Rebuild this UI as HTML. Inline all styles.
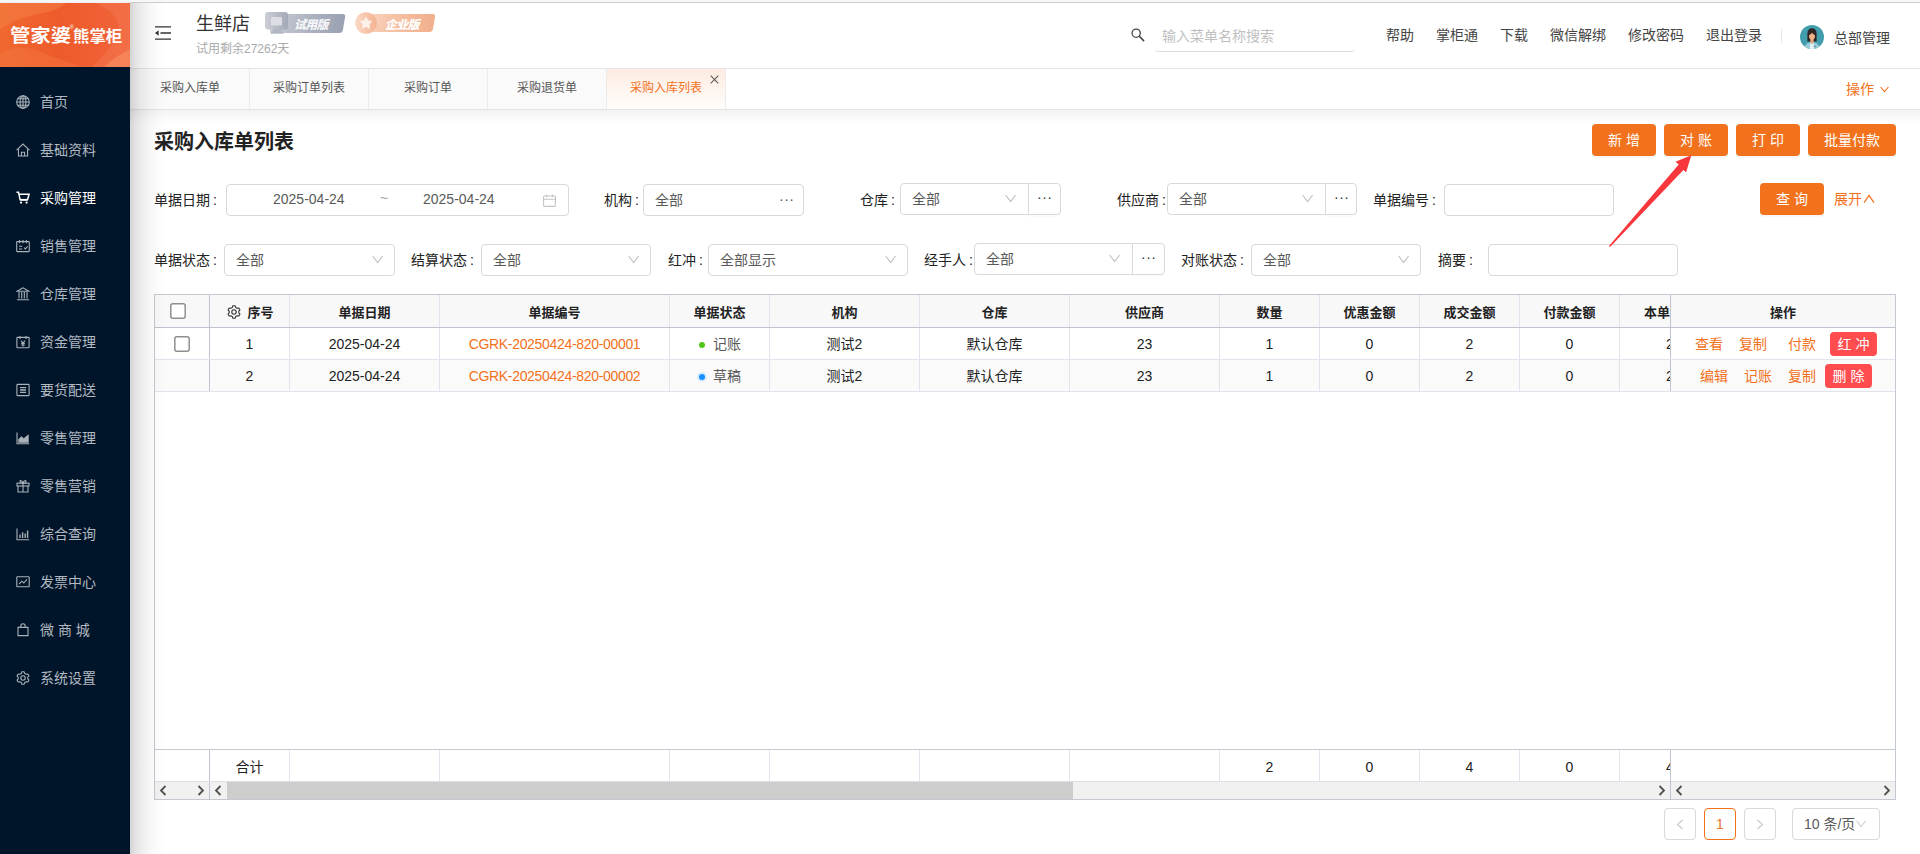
<!DOCTYPE html>
<html lang="zh-CN">
<head>
<meta charset="utf-8">
<title>采购入库单列表</title>
<style>
*{box-sizing:border-box;margin:0;padding:0}
html,body{width:1920px;height:854px;overflow:hidden;background:#fff}
body{font-family:"Liberation Sans","Noto Sans CJK SC",sans-serif;font-size:14px;color:#333;position:relative}
.abs{position:absolute}
.t{position:absolute;white-space:nowrap;line-height:1}
/* top strip */
#topline{left:0;top:0;width:1920px;height:3px;background:linear-gradient(90deg,#eef1f4 0,#eef1f4 130px,#cdcdcd 130px) 0 2px/100% 1px no-repeat,#f7f7f9}
/* sidebar */
#side{left:0;top:3px;width:130px;height:851px;background:#001529}
#logo{left:0;top:0;width:130px;height:64px;overflow:hidden;background:linear-gradient(90deg,#f0682f 0%,#ee5b2b 45%,#f0633a 100%)}
.mi{position:absolute;left:0;width:130px;height:40px;color:#b2b9c1;font-size:14px}
.mi svg{position:absolute;left:16px;top:13px;width:14px;height:14px;fill:none;stroke:#a9b1b9;stroke-width:1.1}
.mi span{position:absolute;left:40px;top:0;line-height:40px;white-space:nowrap}
.mi.on{color:#fff}
.mi.on svg{stroke:#fff}
/* header */
#hdr{left:130px;top:3px;width:1790px;height:66px;background:#fff;border-bottom:1px solid #e6e6e6}
#tabs{left:130px;top:69px;width:1790px;height:41px;background:#fff;border-bottom:1px solid #e4e4e4}
.tab{position:absolute;top:0;height:40px;width:119px;background:#fafafa;border-right:1px solid #ebebeb;font-size:12px;color:#555;text-align:center;line-height:38px}
.tab.on{color:#f2711c;background:linear-gradient(180deg,#fdebe0 0%,#fef5ee 50%,#fffdfb 100%)}
#shadowL{left:130px;top:3px;width:36px;height:851px;background:linear-gradient(90deg,rgba(0,0,0,.17) 0,rgba(0,0,0,.115) 5px,rgba(0,0,0,.08) 10px,rgba(0,0,0,.05) 16px,rgba(0,0,0,.028) 22px,rgba(0,0,0,.01) 28px,rgba(0,0,0,0) 36px);pointer-events:none}
#shadowT{left:130px;top:110px;width:1790px;height:16px;background:linear-gradient(180deg,rgba(0,0,0,.05) 0,rgba(0,0,0,.02) 50%,rgba(0,0,0,0) 100%)}
.nav{top:25px;font-size:14px;color:#444}
/* form */
.lbl{position:absolute;font-size:14px;color:#222;white-space:nowrap;line-height:32px;height:32px}
.box{position:absolute;height:32px;border:1px solid #d9d9d9;border-radius:4px;background:#fff;font-size:14px;color:#595959;line-height:30px;white-space:nowrap}
.box .v{position:absolute;left:11px;top:0}
.btn{position:absolute;height:32px;border-radius:4px;background:#f2711c;color:#fff;font-size:14px;text-align:center;line-height:32px;white-space:nowrap;box-shadow:0 2px 0 rgba(0,0,0,.03)}
.chev{position:absolute;width:12px;height:9px;fill:none;stroke:#bfbfbf;stroke-width:1.1}
.dots{position:absolute;font-size:14px;color:#555;letter-spacing:.5px;line-height:1}
.lbl i{font-style:normal;margin-left:3px}
/* table */
#tbl{left:154px;top:294px;width:1742px;height:506px;border:1px solid #c3c8d1;background:#fff;overflow:hidden}
.vl{position:absolute;width:1px;background:#e1e4ec}
.hl{position:absolute;height:1px;background:#e1e4ec}
.th{position:absolute;top:0;height:32px;line-height:35px;font-size:13px;font-weight:bold;color:#222;text-align:center;white-space:nowrap}
.td{position:absolute;height:31px;line-height:33px;font-size:14px;color:#222;text-align:center;white-space:nowrap}
.lk{color:#f2711c}
.code{letter-spacing:-.32px}
.cb{position:absolute;width:16px;height:16px;border:2px solid #9a9a9a;border-radius:2px;background:#fff}
</style>
</head>
<body>
<div class="abs" id="topline"></div>

<!-- SIDEBAR -->
<div class="abs" id="side">
  <div class="abs" id="logo">
    <svg class="abs" style="left:0;top:0" width="130" height="64" viewBox="0 0 130 64">
      <path d="M0 0H66C58 8 46 9 34 12 20 15 8 20 0 27Z" fill="#f6854a" opacity=".45"/>
      <path d="M0 50C14 42 30 44 44 50 58 56 70 60 84 64H0Z" fill="#f47a44" opacity=".4"/>
      <path d="M96 0H130V64H92C104 52 112 44 118 30 122 18 112 8 96 0Z" fill="#f57c55" opacity=".42"/>
      <path d="M104 64C112 56 122 50 130 46V64Z" fill="#f9986a" opacity=".5"/>
    </svg>
    <span class="t" style="left:10px;top:24px;font-size:18px;font-weight:700;color:#fff;transform:scaleX(1.13);transform-origin:0 0">管家婆</span>
    <span class="t" style="left:70px;top:22px;font-size:5px;color:#fff">®</span>
    <span class="t" style="left:72.5px;top:26px;font-size:15.5px;font-weight:700;color:#fff;transform:scaleX(1.06);transform-origin:0 0">熊掌柜</span>
  </div>
  <div class="mi" style="top:79px"><svg viewBox="0 0 14 14"><circle cx="7" cy="7" r="6.3"/><ellipse cx="7" cy="7" rx="2.9" ry="6.3"/><path d="M7 .7v12.6M.7 7h12.6M1.6 3.8h10.8M1.6 10.2h10.8"/></svg><span>首页</span></div>
  <div class="mi" style="top:127px"><svg viewBox="0 0 14 14"><path d="M.6 7.2 7 1l6.4 6.2"/><path d="M2.4 5.8V13h9.2V5.8"/><path d="M5.4 13V9.2h3.2V13"/></svg><span>基础资料</span></div>
  <div class="mi on" style="top:175px"><svg viewBox="0 0 14 14"><path d="M.5 1.2h2l1.6 7.6h7.4l1.6-5.6H3.2" stroke-width="1.5"/><circle cx="5" cy="11.6" r="1.1" fill="#fff" stroke="none"/><circle cx="10.6" cy="11.6" r="1.1" fill="#fff" stroke="none"/><path d="M4.2 8.8h7.2" stroke-width="1.8"/></svg><span>采购管理</span></div>
  <div class="mi" style="top:223px"><svg viewBox="0 0 14 14"><rect x=".7" y="2.6" width="12.6" height="10" rx=".6"/><path d="M3.6 1v3.2M7 1v3.2M10.4 1v3.2M3 7.2h3.2M3 10h3.2M8 8.6l1.4 1.4 2.2-2.6"/></svg><span>销售管理</span></div>
  <div class="mi" style="top:271px"><svg viewBox="0 0 14 14"><path d="M7 .8 1 4.2h12Z"/><path d="M1 12.8h12M3 5v6.6M5.7 5v6.6M8.3 5v6.6M11 5v6.6"/></svg><span>仓库管理</span></div>
  <div class="mi" style="top:319px"><svg viewBox="0 0 14 14"><rect x=".9" y="2.4" width="12.2" height="10.4" rx=".6"/><path d="M4 1v3M10 1v3M5 5.6 7 8l2-2.4M7 8v3.4M5.2 8.4h3.6M5.2 10h3.6"/></svg><span>资金管理</span></div>
  <div class="mi" style="top:367px"><svg viewBox="0 0 14 14"><rect x=".9" y="1.4" width="12.2" height="11.2" rx=".6"/><path d="M4 4.6h6M4 7h6M4 9.4h6" stroke-width="1.3"/></svg><span>要货配送</span></div>
  <div class="mi" style="top:415px"><svg viewBox="0 0 14 14"><path d="M1 1.5v11.3h12.2"/><path d="M2.6 11.4V8.2l2.8-2.6 2.4 2 4.6-3.8v7.6Z" fill="#a9b1b9" stroke-width=".6"/></svg><span>零售管理</span></div>
  <div class="mi" style="top:463px"><svg viewBox="0 0 14 14"><rect x="1" y="4.2" width="12" height="2.8"/><path d="M2 7v6h10V7M7 4.2V13M7 4.2C5 4.2 3.6 3.4 4 2.2 4.6.8 6.6 2 7 4.2ZM7 4.2C9 4.2 10.4 3.4 10 2.2 9.4.8 7.4 2 7 4.2Z"/></svg><span>零售营销</span></div>
  <div class="mi" style="top:511px"><svg viewBox="0 0 14 14"><path d="M1 1.5v11.3h12.2"/><path d="M4 11V7.6M6.6 11V5.2M9.2 11V6.6M11.6 11V3.4" stroke-width="1.4"/></svg><span>综合查询</span></div>
  <div class="mi" style="top:559px"><svg viewBox="0 0 14 14"><rect x=".8" y="1.8" width="12.4" height="10" rx=".6"/><path d="M3 9.2l2.8-3 2 1.8 3.2-3.6"/></svg><span>发票中心</span></div>
  <div class="mi" style="top:607px"><svg viewBox="0 0 14 14"><path d="M2 4.4h10v8.2H2Z"/><path d="M4.8 4.4V3a2.2 2.2 0 0 1 4.4 0v1.4"/></svg><span>微 商 城</span></div>
  <div class="mi" style="top:655px"><svg viewBox="0 0 14 14"><path d="M8.68 2.40 8.09 0.80 5.91 0.80 5.32 2.40 3.85 3.25 2.17 2.95 1.08 4.85 2.17 6.15 2.17 7.85 1.08 9.15 2.17 11.05 3.85 10.75 5.32 11.60 5.91 13.20 8.09 13.20 8.68 11.60 10.15 10.75 11.83 11.05 12.92 9.15 11.83 7.85 11.83 6.15 12.92 4.85 11.83 2.95 10.15 3.25Z" stroke-linejoin="round"/><circle cx="7" cy="7" r="2.2"/></svg><span>系统设置</span></div>
</div>

<!-- HEADER -->
<div class="abs" id="hdr">
  <svg class="abs" style="left:25px;top:23px" width="16" height="14" viewBox="0 0 16 14"><path d="M0 .8h16M5.5 7h10.5M0 13.2h16" stroke="#333" stroke-width="1.3" fill="none"/><path d="M0 7 3.6 4.2v5.6Z" fill="#333"/></svg>
  <span class="t" style="left:66px;top:12px;font-size:18px;color:#333">生鲜店</span>
  <span class="t" style="left:66px;top:40px;font-size:12px;color:#aaa">试用剩余27262天</span>
  <!-- trial badge -->
  <div class="abs" style="left:141px;top:11px;width:73px;height:19px;border-radius:3px;background:linear-gradient(90deg,#c9ccd4 0%,#a9afbd 60%,#9aa1b2 100%);transform:skewX(-10deg)"></div>
  <svg class="abs" style="left:135px;top:9px" width="24" height="22" viewBox="0 0 24 22"><defs><linearGradient id="gm" x1="0" x2="1"><stop offset="0" stop-color="#ccced6"/><stop offset="1" stop-color="#a3a9b8"/></linearGradient></defs><rect x="0" y="0" width="23" height="17.5" rx="3" fill="url(#gm)"/><rect x="6" y="5" width="11" height="8.5" rx="1" fill="#dcdee3"/><path d="M8 17h8l1 4H7Z" fill="#b3b8c4"/><rect x="5.5" y="20" width="13" height="1.8" rx=".9" fill="#b3b8c4"/></svg>
  <span class="t" style="left:164px;top:16px;font-size:12px;font-weight:900;font-style:italic;color:#f4f5f8;letter-spacing:-.8px">试用版</span>
  <!-- enterprise badge -->
  <div class="abs" style="left:232px;top:11px;width:72px;height:18px;border-radius:3px;background:linear-gradient(90deg,#f9d6c2 0%,#f4bb9c 60%,#f2b08c 100%);transform:skewX(-10deg)"></div>
  <svg class="abs" style="left:225px;top:9px" width="22" height="22" viewBox="0 0 22 22"><defs><linearGradient id="go" x1="0" x2="1"><stop offset="0" stop-color="#fad9c6"/><stop offset="1" stop-color="#f3b291"/></linearGradient></defs><circle cx="11" cy="11" r="10.8" fill="url(#go)"/><path d="M11 5.2l1.8 3.7 4 .6-2.9 2.8.7 4-3.6-1.9-3.6 1.9.7-4L5.2 9.5l4-.6Z" fill="#fdf1ea" stroke="#fdf1ea" stroke-width="1" stroke-linejoin="round"/></svg>
  <span class="t" style="left:255px;top:15.5px;font-size:12px;font-weight:900;font-style:italic;color:#fff;letter-spacing:-.8px">企业版</span>
  <!-- search -->
  <svg class="abs" style="left:1001px;top:25px" width="14" height="14" viewBox="0 0 14 14"><circle cx="5.2" cy="5.2" r="4.1" fill="none" stroke="#444" stroke-width="1.3"/><path d="M8.300 8.300l4.300 4.300" stroke="#444" stroke-width="1.600" stroke-linecap="round"/></svg>
  <div class="abs" style="left:1025px;top:16px;width:200px;height:33px;border-bottom:1px solid #dcdcdc;border-radius:0 0 4px 4px"></div>
  <span class="t" style="left:1032px;top:26px;font-size:14px;color:#bfbfbf">输入菜单名称搜索</span>
  <span class="t nav" style="left:1256px">帮助</span>
  <span class="t nav" style="left:1306px">掌柜通</span>
  <span class="t nav" style="left:1370px">下载</span>
  <span class="t nav" style="left:1420px">微信解绑</span>
  <span class="t nav" style="left:1498px">修改密码</span>
  <span class="t nav" style="left:1576px">退出登录</span>
  <div class="abs" style="left:1651px;top:26px;width:1px;height:14px;background:#e8e8e8"></div>
  <svg class="abs" style="left:1670px;top:22px" width="24" height="24" viewBox="0 0 24 24"><defs><clipPath id="av"><circle cx="12" cy="12" r="12"/></clipPath></defs><g clip-path="url(#av)"><rect width="24" height="24" fill="#429dad"/><path d="M7.400 16.400V8.600C7.400 5.200 9.200 3.200 12 3.200s4.600 2 4.600 5.400v7.800Z" fill="#2d2523"/><path d="M4.400 24c.2-4.200 2.600-6.800 7.600-6.800s7.400 2.600 7.600 6.800Z" fill="#93ccda"/><path d="M10.400 14h3.200v3.600L12 19.400l-1.600-1.800Z" fill="#eaa67c"/><ellipse cx="12" cy="10.700" rx="3" ry="4.100" fill="#f3b286"/><path d="M8.800 10.400C8.900 7.200 10.200 5.800 12 5.800s3.100 1.400 3.200 4.600C14 9.800 13 8.900 12 7.800 11 8.900 10 9.800 8.800 10.400Z" fill="#2d2523"/><path d="M10.500 17.400l1.500 2.200 1.500-2.200.9 6.600h-4.800Z" fill="#e4f2f6"/><rect x="13.800" y="20.800" width="2.200" height="1.400" fill="#6e8fa8"/></g></svg>
  <span class="t" style="left:1704px;top:28px;font-size:14px;color:#444">总部管理</span>
</div>
<div class="abs" id="tabs">
  <div class="abs" style="left:0;top:0;width:1px;height:40px;background:#fafafa"></div>
  <div class="tab" style="left:1px">采购入库单</div>
  <div class="tab" style="left:120px">采购订单列表</div>
  <div class="tab" style="left:239px">采购订单</div>
  <div class="tab" style="left:358px">采购退货单</div>
  <div class="tab on" style="left:477px">采购入库列表</div>
  <svg class="abs" style="left:579.500px;top:5.500px" width="9" height="9" viewBox="0 0 9 9"><path d="M.7.7l7.600 7.600M8.300.7.7 8.300" stroke="#5a5a5a" stroke-width="1.100" fill="none"/></svg>
  <span class="t" style="left:1716px;top:13px;font-size:14px;color:#f2711c">操作</span>
  <svg class="abs" style="left:1750px;top:17px" width="9" height="7" viewBox="0 0 9 7"><path d="M.6 1l3.900 4.600L8.400 1" stroke="#f2711c" stroke-width="1.100" fill="none"/></svg>
</div>
<div class="abs" id="shadowT"></div>

<!-- CONTENT -->
<div class="abs" id="content" style="left:0;top:0;width:1920px;height:854px">
<span class="t" style="left:154px;top:132px;font-size:20px;font-weight:bold;color:#222">采购入库单列表</span>
<div class="btn" style="left:1592px;top:124px;width:64px">新 增</div>
<div class="btn" style="left:1664px;top:124px;width:64px">对 账</div>
<div class="btn" style="left:1736px;top:124px;width:64px">打 印</div>
<div class="btn" style="left:1808px;top:124px;width:88px">批量付款</div>
<span class="lbl" style="left:154px;top:184px">单据日期<i>:</i></span>
<div class="box" style="left:226px;top:184px;width:343px"><span class="t" style="left:46px;top:7px;font-size:14px;color:#595959">2025-04-24</span><span class="t" style="left:153px;top:6px;font-size:14px;color:#a0a0a0">~</span><span class="t" style="left:196px;top:7px;font-size:14px;color:#595959">2025-04-24</span><svg class="abs" style="left:316px;top:9px" width="13" height="13" viewBox="0 0 13 13"><rect x=".6" y="2" width="11.800" height="10.400" rx=".8" fill="none" stroke="#c4c4c4" stroke-width="1.100"/><path d="M.6 5.200h11.800M3.600.4v2.800M9.400.4v2.800" stroke="#c4c4c4" stroke-width="1.100" fill="none"/></svg></div>
<span class="lbl" style="left:604px;top:184px">机构<i>:</i></span>
<div class="box" style="left:643px;top:184px;width:161px"><span class="v">全部</span><span class="dots" style="left:135px;top:7px">···</span></div>
<span class="lbl" style="left:860px;top:184px">仓库<i>:</i></span>
<div class="box" style="left:900px;top:183px;width:129px;border-radius:4px 0 0 4px"><span class="v">全部</span><svg class="chev" style="left:104px;top:10px" viewBox="0 0 12 9"><path d="M.6 1l5 6.600L10.600 1"/></svg></div><div class="box" style="left:1028px;top:183px;width:33px;border-radius:0 4px 4px 0;box-shadow:0 2px 0 rgba(0,0,0,.015)"><span class="dots" style="left:8px;top:6px;color:#333">···</span></div>
<span class="lbl" style="left:1117px;top:184px">供应商<i>:</i></span>
<div class="box" style="left:1167px;top:183px;width:159px;border-radius:4px 0 0 4px"><span class="v">全部</span><svg class="chev" style="left:134px;top:10px" viewBox="0 0 12 9"><path d="M.6 1l5 6.600L10.600 1"/></svg></div><div class="box" style="left:1325px;top:183px;width:32px;border-radius:0 4px 4px 0;box-shadow:0 2px 0 rgba(0,0,0,.015)"><span class="dots" style="left:8px;top:6px;color:#333">···</span></div>
<span class="lbl" style="left:1373px;top:184px">单据编号<i>:</i></span>
<div class="box" style="left:1444px;top:184px;width:170px"></div>
<div class="btn" style="left:1760px;top:183px;width:64px">查 询</div>
<span class="t" style="left:1834px;top:192px;font-size:14px;color:#f2711c">展开</span>
<svg class="abs" style="left:1863px;top:194px" width="12" height="10" viewBox="0 0 12 10"><path d="M1 8.600 6 1.400l5 7.200" stroke="#f2711c" stroke-width="1.200" fill="none"/></svg>
<span class="lbl" style="left:154px;top:244px">单据状态<i>:</i></span>
<div class="box" style="left:224px;top:244px;width:171px"><span class="v">全部</span><svg class="chev" style="left:147px;top:10px" viewBox="0 0 12 9"><path d="M.6 1l5 6.600L10.600 1"/></svg></div>
<span class="lbl" style="left:411px;top:244px">结算状态<i>:</i></span>
<div class="box" style="left:481px;top:244px;width:170px"><span class="v">全部</span><svg class="chev" style="left:146px;top:10px" viewBox="0 0 12 9"><path d="M.6 1l5 6.600L10.600 1"/></svg></div>
<span class="lbl" style="left:668px;top:244px">红冲<i>:</i></span>
<div class="box" style="left:708px;top:244px;width:200px"><span class="v">全部显示</span><svg class="chev" style="left:176px;top:10px" viewBox="0 0 12 9"><path d="M.6 1l5 6.600L10.600 1"/></svg></div>
<span class="lbl" style="left:924px;top:244px">经手人<i>:</i></span>
<div class="box" style="left:974px;top:243px;width:159px;border-radius:4px 0 0 4px"><span class="v">全部</span><svg class="chev" style="left:134px;top:10px" viewBox="0 0 12 9"><path d="M.6 1l5 6.600L10.600 1"/></svg></div><div class="box" style="left:1132px;top:243px;width:33px;border-radius:0 4px 4px 0;box-shadow:0 2px 0 rgba(0,0,0,.015)"><span class="dots" style="left:8px;top:6px;color:#333">···</span></div>
<span class="lbl" style="left:1181px;top:244px">对账状态<i>:</i></span>
<div class="box" style="left:1251px;top:244px;width:170px"><span class="v">全部</span><svg class="chev" style="left:146px;top:10px" viewBox="0 0 12 9"><path d="M.6 1l5 6.600L10.600 1"/></svg></div>
<span class="lbl" style="left:1438px;top:244px">摘要<i>:</i></span>
<div class="box" style="left:1488px;top:244px;width:190px"></div>
<svg class="abs" style="left:1600px;top:150px" width="100" height="100" viewBox="1600 150 100 100"><path d="M1609 245.900 1678.700 164.600 1675.500 161.700 1691.300 155.300 1686.100 172.200 1683.400 169.900 1610.100 246.900Z" fill="#f8373c"/></svg>
<div class="abs" style="left:154px;top:294px;width:1742px;height:506px;border:1px solid #c3c8d1"></div>
<div class="abs" style="left:155px;top:295px;width:1740px;height:32px;background:#f8f8f9"></div>
<div class="abs" style="left:155px;top:360px;width:1740px;height:31px;background:#fafafa"></div>
<div class="hl" style="left:155px;top:327px;width:1740px;background:#bfc4ce"></div>
<div class="hl" style="left:155px;top:359px;width:1740px"></div>
<div class="hl" style="left:155px;top:391px;width:1740px"></div>
<div class="hl" style="left:155px;top:749px;width:1740px;background:#c3c8d1"></div>
<div class="abs" style="left:155px;top:781px;width:1740px;height:18px;background:#f1f1f1;border-top:1px solid #dde0e8"></div>
<div class="abs" style="left:227px;top:782px;width:846px;height:17px;background:#cdcdcd"></div>
<svg class="abs" style="left:159px;top:785px" width="8" height="11" viewBox="0 0 8 11"><path d="M6.500 1 2 5.500l4.500 4.500" stroke="#505050" stroke-width="1.800" fill="none"/></svg>
<svg class="abs" style="left:197px;top:785px" width="8" height="11" viewBox="0 0 8 11"><path d="M1.500 1 6 5.500 1.500 10" stroke="#505050" stroke-width="1.800" fill="none"/></svg>
<svg class="abs" style="left:214px;top:785px" width="8" height="11" viewBox="0 0 8 11"><path d="M6.500 1 2 5.500l4.500 4.500" stroke="#505050" stroke-width="1.800" fill="none"/></svg>
<svg class="abs" style="left:1658px;top:785px" width="8" height="11" viewBox="0 0 8 11"><path d="M1.500 1 6 5.500 1.500 10" stroke="#505050" stroke-width="1.800" fill="none"/></svg>
<svg class="abs" style="left:1675px;top:785px" width="8" height="11" viewBox="0 0 8 11"><path d="M6.500 1 2 5.500l4.500 4.500" stroke="#505050" stroke-width="1.800" fill="none"/></svg>
<svg class="abs" style="left:1883px;top:785px" width="8" height="11" viewBox="0 0 8 11"><path d="M1.500 1 6 5.500 1.500 10" stroke="#505050" stroke-width="1.800" fill="none"/></svg>
<div class="vl" style="left:209px;top:295px;height:32px;background:#bfc4ce"></div>
<div class="vl" style="left:209px;top:328px;height:31px;background:#bfc4ce"></div>
<div class="vl" style="left:209px;top:360px;height:31px;background:#bfc4ce"></div>
<div class="vl" style="left:209px;top:750px;height:31px;background:#bfc4ce"></div>
<div class="vl" style="left:289px;top:295px;height:32px;background:#e1e4ec"></div>
<div class="vl" style="left:289px;top:328px;height:31px;background:#e1e4ec"></div>
<div class="vl" style="left:289px;top:360px;height:31px;background:#e1e4ec"></div>
<div class="vl" style="left:289px;top:750px;height:31px;background:#e1e4ec"></div>
<div class="vl" style="left:439px;top:295px;height:32px;background:#e1e4ec"></div>
<div class="vl" style="left:439px;top:328px;height:31px;background:#e1e4ec"></div>
<div class="vl" style="left:439px;top:360px;height:31px;background:#e1e4ec"></div>
<div class="vl" style="left:439px;top:750px;height:31px;background:#e1e4ec"></div>
<div class="vl" style="left:669px;top:295px;height:32px;background:#e1e4ec"></div>
<div class="vl" style="left:669px;top:328px;height:31px;background:#e1e4ec"></div>
<div class="vl" style="left:669px;top:360px;height:31px;background:#e1e4ec"></div>
<div class="vl" style="left:669px;top:750px;height:31px;background:#e1e4ec"></div>
<div class="vl" style="left:769px;top:295px;height:32px;background:#e1e4ec"></div>
<div class="vl" style="left:769px;top:328px;height:31px;background:#e1e4ec"></div>
<div class="vl" style="left:769px;top:360px;height:31px;background:#e1e4ec"></div>
<div class="vl" style="left:769px;top:750px;height:31px;background:#e1e4ec"></div>
<div class="vl" style="left:919px;top:295px;height:32px;background:#e1e4ec"></div>
<div class="vl" style="left:919px;top:328px;height:31px;background:#e1e4ec"></div>
<div class="vl" style="left:919px;top:360px;height:31px;background:#e1e4ec"></div>
<div class="vl" style="left:919px;top:750px;height:31px;background:#e1e4ec"></div>
<div class="vl" style="left:1069px;top:295px;height:32px;background:#e1e4ec"></div>
<div class="vl" style="left:1069px;top:328px;height:31px;background:#e1e4ec"></div>
<div class="vl" style="left:1069px;top:360px;height:31px;background:#e1e4ec"></div>
<div class="vl" style="left:1069px;top:750px;height:31px;background:#e1e4ec"></div>
<div class="vl" style="left:1219px;top:295px;height:32px;background:#e1e4ec"></div>
<div class="vl" style="left:1219px;top:328px;height:31px;background:#e1e4ec"></div>
<div class="vl" style="left:1219px;top:360px;height:31px;background:#e1e4ec"></div>
<div class="vl" style="left:1219px;top:750px;height:31px;background:#e1e4ec"></div>
<div class="vl" style="left:1319px;top:295px;height:32px;background:#e1e4ec"></div>
<div class="vl" style="left:1319px;top:328px;height:31px;background:#e1e4ec"></div>
<div class="vl" style="left:1319px;top:360px;height:31px;background:#e1e4ec"></div>
<div class="vl" style="left:1319px;top:750px;height:31px;background:#e1e4ec"></div>
<div class="vl" style="left:1419px;top:295px;height:32px;background:#e1e4ec"></div>
<div class="vl" style="left:1419px;top:328px;height:31px;background:#e1e4ec"></div>
<div class="vl" style="left:1419px;top:360px;height:31px;background:#e1e4ec"></div>
<div class="vl" style="left:1419px;top:750px;height:31px;background:#e1e4ec"></div>
<div class="vl" style="left:1519px;top:295px;height:32px;background:#e1e4ec"></div>
<div class="vl" style="left:1519px;top:328px;height:31px;background:#e1e4ec"></div>
<div class="vl" style="left:1519px;top:360px;height:31px;background:#e1e4ec"></div>
<div class="vl" style="left:1519px;top:750px;height:31px;background:#e1e4ec"></div>
<div class="vl" style="left:1619px;top:295px;height:32px;background:#e1e4ec"></div>
<div class="vl" style="left:1619px;top:328px;height:31px;background:#e1e4ec"></div>
<div class="vl" style="left:1619px;top:360px;height:31px;background:#e1e4ec"></div>
<div class="vl" style="left:1619px;top:750px;height:31px;background:#e1e4ec"></div>
<div class="vl" style="left:209px;top:782px;height:17px;background:#bfc4ce"></div>
<svg class="abs" style="left:226.5px;top:305px" width="14" height="14" viewBox="0 0 14 14" fill="none" stroke="#333" stroke-width="1.100"><path d="M8.68 2.40 8.09 0.80 5.91 0.80 5.32 2.40 3.85 3.25 2.17 2.95 1.08 4.85 2.17 6.15 2.17 7.85 1.08 9.15 2.17 11.05 3.85 10.75 5.32 11.60 5.91 13.20 8.09 13.20 8.68 11.60 10.15 10.75 11.83 11.05 12.92 9.15 11.83 7.85 11.83 6.15 12.92 4.85 11.83 2.95 10.15 3.25Z" stroke-linejoin="round"/><circle cx="7" cy="7" r="2.2"/></svg>
<div class="th" style="left:247px;top:295px;width:27px">序号</div>
<div class="th" style="left:290px;top:295px;width:149px">单据日期</div>
<div class="th" style="left:440px;top:295px;width:229px">单据编号</div>
<div class="th" style="left:670px;top:295px;width:99px">单据状态</div>
<div class="th" style="left:770px;top:295px;width:149px">机构</div>
<div class="th" style="left:920px;top:295px;width:149px">仓库</div>
<div class="th" style="left:1070px;top:295px;width:149px">供应商</div>
<div class="th" style="left:1220px;top:295px;width:99px">数量</div>
<div class="th" style="left:1320px;top:295px;width:99px">优惠金额</div>
<div class="th" style="left:1420px;top:295px;width:99px">成交金额</div>
<div class="th" style="left:1520px;top:295px;width:99px">付款金额</div>
<div class="td" style="left:210px;top:328px;width:79px">1</div>
<div class="td" style="left:290px;top:328px;width:149px">2025-04-24</div>
<div class="td lk code" style="left:440px;top:328px;width:229px">CGRK-20250424-820-00001</div>
<div class="abs" style="left:699px;top:342px;width:6px;height:6px;border-radius:50%;background:#52c41a"></div>
<div class="td" style="left:713px;top:328px;color:#595959">记账</div>
<div class="td" style="left:770px;top:328px;width:149px">测试2</div>
<div class="td" style="left:920px;top:328px;width:149px">默认仓库</div>
<div class="td" style="left:1070px;top:328px;width:149px">23</div>
<div class="td" style="left:1220px;top:328px;width:99px">1</div>
<div class="td" style="left:1320px;top:328px;width:99px">0</div>
<div class="td" style="left:1420px;top:328px;width:99px">2</div>
<div class="td" style="left:1520px;top:328px;width:99px">0</div>
<div class="td" style="left:210px;top:360px;width:79px">2</div>
<div class="td" style="left:290px;top:360px;width:149px">2025-04-24</div>
<div class="td lk code" style="left:440px;top:360px;width:229px">CGRK-20250424-820-00002</div>
<div class="abs" style="left:699px;top:374px;width:6px;height:6px;border-radius:50%;background:#1890ff;box-shadow:0 0 0 2px #d9ecff"></div>
<div class="td" style="left:713px;top:360px;color:#595959">草稿</div>
<div class="td" style="left:770px;top:360px;width:149px">测试2</div>
<div class="td" style="left:920px;top:360px;width:149px">默认仓库</div>
<div class="td" style="left:1070px;top:360px;width:149px">23</div>
<div class="td" style="left:1220px;top:360px;width:99px">1</div>
<div class="td" style="left:1320px;top:360px;width:99px">0</div>
<div class="td" style="left:1420px;top:360px;width:99px">2</div>
<div class="td" style="left:1520px;top:360px;width:99px">0</div>
<div class="td" style="left:210px;top:751px;width:79px">合计</div>
<div class="td" style="left:1220px;top:751px;width:99px">2</div>
<div class="td" style="left:1320px;top:751px;width:99px">0</div>
<div class="td" style="left:1420px;top:751px;width:99px">4</div>
<div class="td" style="left:1520px;top:751px;width:99px">0</div>
<div class="abs" style="left:1620px;top:295px;width:50px;height:505px;overflow:hidden"><div class="th" style="left:24px;top:0;text-align:left">本单金额</div><div class="td" style="left:46px;top:33px;text-align:left">2</div><div class="td" style="left:46px;top:65px;text-align:left">2</div><div class="td" style="left:46px;top:456px;text-align:left">4</div></div>
<svg class="abs" style="left:170px;top:303px" width="16" height="16" viewBox="0 0 16 16"><rect x=".8" y=".8" width="14.400" height="14.400" rx="2" fill="#fff" stroke="#8f8f8f" stroke-width="1.500"/></svg>
<svg class="abs" style="left:174px;top:336px" width="16" height="16" viewBox="0 0 16 16"><rect x=".8" y=".8" width="14.400" height="14.400" rx="2" fill="#fff" stroke="#8f8f8f" stroke-width="1.500"/></svg>
<div class="abs" style="left:1670px;top:295px;width:225px;height:32px;background:#f8f8f9;border-left:1px solid #bfc4ce"></div>
<div class="abs" style="left:1670px;top:328px;width:225px;height:31px;background:#fff;border-left:1px solid #bfc4ce"></div>
<div class="abs" style="left:1670px;top:360px;width:225px;height:31px;background:#fafafa;border-left:1px solid #bfc4ce"></div>
<div class="abs" style="left:1670px;top:750px;width:225px;height:49px;border-left:1px solid #bfc4ce"></div>
<div class="th" style="left:1671px;top:295px;width:224px">操作</div>
<div class="td lk" style="left:1695px;top:328px">查看</div>
<div class="td lk" style="left:1739px;top:328px">复制</div>
<div class="td lk" style="left:1788px;top:328px">付款</div>
<div class="abs" style="left:1830px;top:332px;width:47px;height:24px;border-radius:4px;background:#ff4d4f;color:#fff;font-size:14px;line-height:24px;text-align:center;white-space:nowrap">红 冲</div>
<div class="td lk" style="left:1700px;top:360px">编辑</div>
<div class="td lk" style="left:1744px;top:360px">记账</div>
<div class="td lk" style="left:1788px;top:360px">复制</div>
<div class="abs" style="left:1825px;top:364px;width:47px;height:24px;border-radius:4px;background:#ff4d4f;color:#fff;font-size:14px;line-height:24px;text-align:center;white-space:nowrap">删 除</div>
<div class="abs" style="left:1664px;top:808px;width:32px;height:32px;border:1px solid #d9d9d9;border-radius:4px;background:#fff;text-align:center;line-height:30px;font-size:14px;white-space:nowrap"><svg width="8" height="11" viewBox="0 0 8 11" style="vertical-align:-1px"><path d="M6.500 1 1.500 5.500l5 4.500" stroke="#c8c8c8" stroke-width="1.100" fill="none"/></svg></div>
<div class="abs" style="left:1704px;top:808px;width:32px;height:32px;border:1px solid #f2711c;border-radius:4px;background:#fff;text-align:center;line-height:30px;font-size:14px;white-space:nowrap"><span style="color:#f2711c">1</span></div>
<div class="abs" style="left:1744px;top:808px;width:32px;height:32px;border:1px solid #d9d9d9;border-radius:4px;background:#fff;text-align:center;line-height:30px;font-size:14px;white-space:nowrap"><svg width="8" height="11" viewBox="0 0 8 11" style="vertical-align:-1px"><path d="M1.500 1 6.500 5.500l-5 4.500" stroke="#c8c8c8" stroke-width="1.100" fill="none"/></svg></div>
<div class="abs" style="left:1792px;top:808px;width:88px;height:32px;border:1px solid #d9d9d9;border-radius:4px;background:#fff;text-align:center;line-height:30px;font-size:14px;white-space:nowrap"><span style="position:absolute;left:11px;top:0;color:#595959">10 条/页</span><svg class="chev" style="left:63px;top:11px;width:11px;height:8px" viewBox="0 0 12 9"><path d="M.6 1l5 6.600L10.600 1"/></svg></div>
</div>

<div class="abs" id="shadowL"></div>
</body>
</html>
